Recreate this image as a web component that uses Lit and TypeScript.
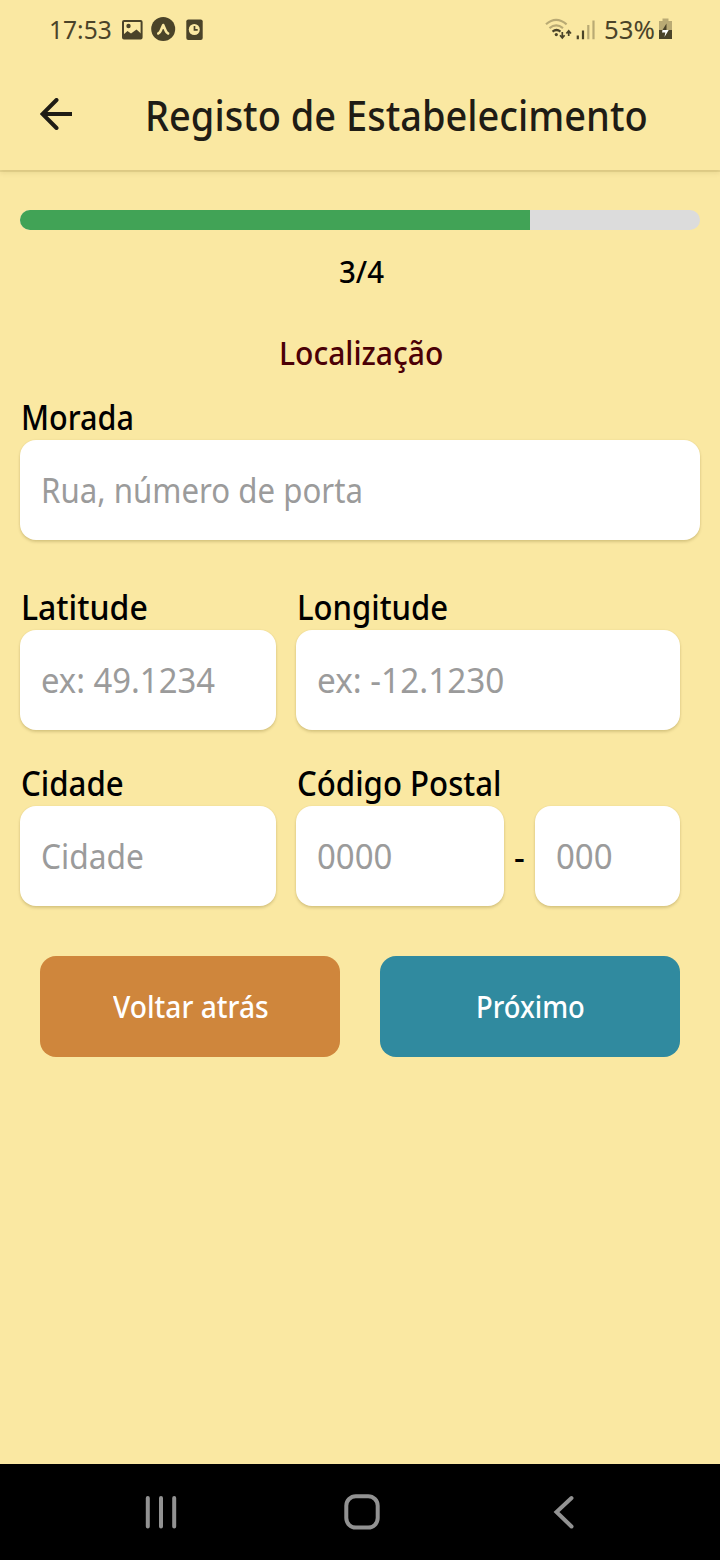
import { LitElement, html, css } from "lit";

const FAMILY = '"Noto Sans"';
const ctx = document.createElement("canvas").getContext("2d")!;

/** Text set in slightly condensed glyphs so that its ink spans `ink` pixels. */
class FitText extends LitElement {
  static properties = {
    text: { type: String },
    ink: { type: Number },
    size: { type: Number },
    weight: { type: Number },
  };
  declare text: string;
  declare ink: number;
  declare size: number;
  declare weight: number;

  static styles = css`
    :host { display: block; flex: none; }
    .box { display: block; font-family: "Noto Sans", sans-serif; white-space: nowrap; }
    .glyphs {
      display: inline-block;
      white-space: pre;
      transform-origin: 0 50%;
    }
  `;

  constructor() {
    super();
    this.text = "";
    this.ink = 0;
    this.size = 35;
    this.weight = 500;
  }

  render() {
    ctx.font = `${this.weight} ${this.size}px ${FAMILY}`;
    const m = ctx.measureText(this.text);
    const scale = this.ink / (m.actualBoundingBoxRight + m.actualBoundingBoxLeft);
    return html`<span
      class="box"
      style="width:${m.width * scale}px;font-size:${this.size}px;font-weight:${this.weight}"
      ><span class="glyphs" style="transform:scaleX(${scale})">${this.text}</span></span
    >`;
  }
}
customElements.define("fit-text", FitText);

const fit = (text: string, ink: number, size = 35, weight = 500) =>
  html`<fit-text .text=${text} .ink=${ink} .size=${size} .weight=${weight}></fit-text>`;

class AppRoot extends LitElement {
  static styles = css`
    :host {
      display: flex;
      flex-direction: column;
      width: 720px;
      height: 1560px;
      background: #fae8a2;
      color: #000;
      overflow: hidden;
      font-family: "Noto Sans", sans-serif;
    }
    * { box-sizing: border-box; }
    svg { display: block; flex: none; }
    .status {
      display: flex;
      align-items: center;
      justify-content: space-between;
      height: 60px;
      padding: 0 47px 0 49px;
      line-height: 60px;
      color: #4a4329;
    }
    .side { display: flex; align-items: center; height: 60px; }
    .side fit-text { margin-bottom: 2px; }
    .header {
      display: flex;
      align-items: center;
      height: 110px;
      padding-left: 40px;
      line-height: 110px;
      color: #1f1c15;
      box-shadow: 0 2px 0 rgba(90, 70, 0, 0.1), 0 3px 5px rgba(90, 70, 0, 0.1);
      clip-path: inset(0 0 -10px 0);
    }
    .header svg { margin: 0 72px 2px 0; }
    .form { flex: 1; padding: 40px 20px 0; }
    .progress {
      height: 20px;
      border-radius: 10px;
      background: #dcdcdc;
      overflow: hidden;
    }
    .fill { height: 20px; background: #41a356; }
    .step, .section {
      display: flex;
      justify-content: center;
      height: 40px;
      line-height: 42px;
    }
    .step { margin-top: 20px; padding-left: 2px; }
    .section { margin: 42px 0 20px; padding-left: 3px; color: #4b0006; }
    .row { display: flex; gap: 20px; }
    .row.first { margin-bottom: 42px; }
    .row.second { margin-bottom: 28px; }
    .label { display: block; height: 48px; padding-left: 1px; line-height: 50px; }
    .field {
      display: flex;
      align-items: center;
      height: 100px;
      padding-left: 21px;
      line-height: 100px;
      border-radius: 16px;
      background: #fff;
      color: #9b9b9b;
      box-shadow: 0 2px 3px rgba(90, 70, 0, 0.2), 0 0 2px rgba(90, 70, 0, 0.08);
    }
    .full { width: 680px; }
    .narrow { width: 256px; }
    .wide { width: 384px; }
    .postal { display: flex; align-items: center; justify-content: space-between; }
    .code { width: 208px; }
    .suffix { width: 145px; }
    .actions { display: flex; gap: 40px; padding: 50px 20px 0; }
    .button {
      display: flex;
      align-items: center;
      justify-content: center;
      width: 300px;
      height: 101px;
      padding-left: 1px;
      border-radius: 16px;
      line-height: 101px;
      color: #fff;
    }
    .back { background: #cf863c; }
    .next { background: #308a9f; }
    .nav { height: 96px; background: #000; }
  `;

  render() {
    return html`
      <div class="status">
        <div class="side">
          ${fit("17:53", 60, 26, 400)}
          <svg width="96" height="60" viewBox="112 0 96 60">
            <rect x="123" y="21" width="18.6" height="17.4" rx="1" fill="none" stroke="#4a4329" stroke-width="2" />
            <circle cx="128.5" cy="26" r="2.2" fill="#4a4329" />
            <path d="M123 35l4.5-4 3.5 2.5 5.5-4 5 4.5v5H123z" fill="#4a4329" />
            <circle cx="163.2" cy="29" r="12" fill="#4a4329" />
            <path d="M158.3 33.5q1.5-.5 2.5-3l2.4-5.5 2.4 5.5q1 2.5 2.5 3" fill="none" stroke="#fae8a2" stroke-width="2.6" stroke-linecap="round" stroke-linejoin="round" />
            <rect x="186.3" y="19.5" width="16.4" height="20.5" rx="2" fill="#4a4329" />
            <circle cx="194.3" cy="29.5" r="5.5" fill="#fae8a2" />
            <path d="M194.5 26v3.8h3.2" fill="none" stroke="#4a4329" stroke-width="1.7" />
          </svg>
        </div>
        <div class="side">
          <svg width="59" height="60" viewBox="546 0 59 60" fill="none">
            <path d="M547 24.3q10-9 20.6 0M550.5 28.2q6.700-5.500 13.500 0" stroke="#b9aa74" stroke-width="2.2" />
            <path d="M553.5 31.6q4-3.200 8 0" stroke="#4a4329" stroke-width="2.2" />
            <circle cx="557.3" cy="34.6" r="1.6" fill="#4a4329" />
            <path d="M563.3 32v6M561 35.3l2.300 2.700 2.300-2.700M569.7 36v-5M567.4 33.5l2.300-2.700 2.300 2.700" stroke="#4a4329" stroke-width="1.7" />
            <path d="M578.8 35.5v3.700M584 30.5v8.700" stroke="#4a4329" stroke-width="2.2" />
            <path d="M589.3 25v14.200M594.5 20.5v18.700" stroke="#b9aa74" stroke-width="2.2" />
          </svg>
          ${fit("53%", 49.3, 26, 400)}
          <svg width="18" height="60" viewBox="655 0 18 60">
            <path d="M659 21h3.500v-2.500h6V21h3.500v9h-13z" fill="#b9aa74" />
            <path d="M659 30h13v9h-13z" fill="#4a4329" />
            <path d="M666.5 23.5l-4 6.500h4z" fill="#4a4329" />
            <path d="M662.5 30h6.200l-4.200 7 .8-4.500h-3.300z" fill="#fff" />
          </svg>
        </div>
      </div>
      <div class="header">
        <svg width="33" height="32" viewBox="40 98 33 32" fill="none" stroke="#1f1c15" stroke-width="4">
          <path d="M72 114H43" />
          <path d="M56.5 100L42.5 114l14 14" stroke-linecap="round" />
        </svg>
        ${fit("Registo de Estabelecimento", 498, 41)}
      </div>
      <div class="form">
        <div class="progress"><div class="fill" style="width:75%"></div></div>
        <div class="step">${fit("3/4", 44.3, 31)}</div>
        <div class="section">${fit("Localização", 160.5, 33)}</div>
        <div class="row first">
          <div class="full">
            <div class="label">${fit("Morada", 108.5)}</div>
            <div class="field">${fit("Rua, número de porta", 317, 35, 400)}</div>
          </div>
        </div>
        <div class="row second">
          <div class="narrow">
            <div class="label">${fit("Latitude", 123)}</div>
            <div class="field">${fit("ex: 49.1234", 173, 35, 400)}</div>
          </div>
          <div class="wide">
            <div class="label">${fit("Longitude", 147.5)}</div>
            <div class="field">${fit("ex: -12.1230", 185.5, 35, 400)}</div>
          </div>
        </div>
        <div class="row">
          <div class="narrow">
            <div class="label">${fit("Cidade", 100)}</div>
            <div class="field">${fit("Cidade", 99.5, 35, 400)}</div>
          </div>
          <div class="wide">
            <div class="label">${fit("Código Postal", 200.5)}</div>
            <div class="postal">
              <div class="field code">${fit("0000", 73.5, 35, 400)}</div>
              ${fit("-", 9.4, 32)}
              <div class="field suffix">${fit("000", 54.7, 35, 400)}</div>
            </div>
          </div>
        </div>
        <div class="actions">
          <div class="button back">${fit("Voltar atrás", 154.8, 31)}</div>
          <div class="button next">${fit("Próximo", 106.2, 31)}</div>
        </div>
      </div>
      <div class="nav">
        <svg width="720" height="96" viewBox="0 1464 720 96" fill="none" stroke="#929292" stroke-width="4" stroke-linecap="round">
          <path d="M147.8 1498v28.500M161 1498v28.500M174.2 1498v28.500" />
          <rect x="346.3" y="1496.2" width="31.4" height="31.4" rx="9.5" />
          <path d="M571.5 1498L556.5 1512l15 14.500" />
        </svg>
      </div>
    `;
  }
}
customElements.define("app-root", AppRoot);
